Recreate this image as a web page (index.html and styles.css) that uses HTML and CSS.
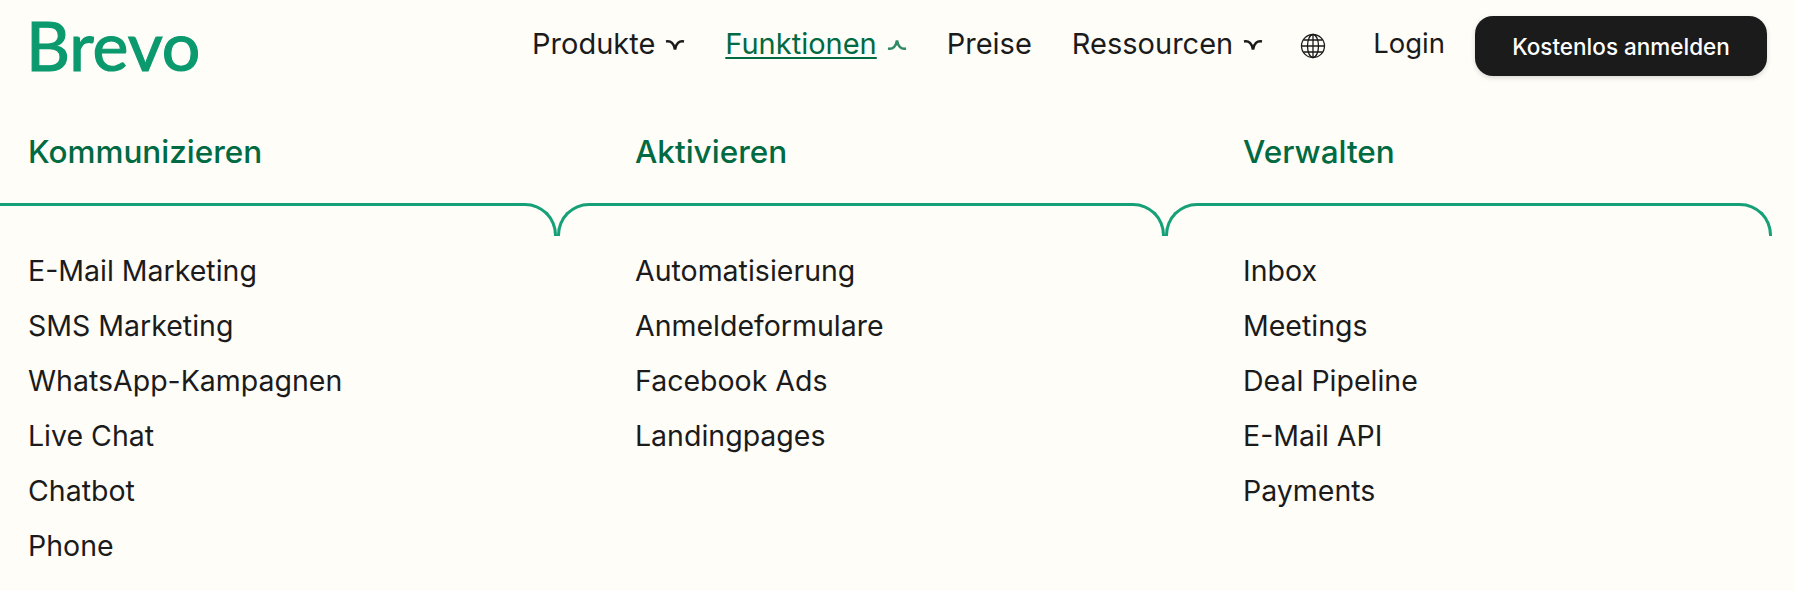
FILE: index.html
```html
<!DOCTYPE html>
<html lang="de">
<head>
    <meta charset="UTF-8">
    <meta name="viewport" content="width=device-width, initial-scale=1.0">
    <title>Brevo</title>
    <link rel="stylesheet" href="styles.css">
</head>
<body>
    <header class="header">
        <a class="logo" href="#">Brevo</a>
        <nav class="nav">
            <a class="nav-link" href="#">Produkte
                <svg class="chevron" viewBox="0 0 20 12"><path d="M1 2.5C6 1.5 9 4.5 10 10.5C11 4.5 14 1.5 19 2.5"/></svg>
            </a>
            <a class="nav-link active" href="#"><span class="nav-text">Funktionen</span>
                <svg class="chevron" viewBox="0 0 20 12"><path d="M1 9.5C6 10.5 9 7.5 10 1.5C11 7.5 14 10.5 19 9.5"/></svg>
            </a>
            <a class="nav-link" href="#">Preise</a>
            <a class="nav-link" href="#">Ressourcen
                <svg class="chevron" viewBox="0 0 20 12"><path d="M1 2.5C6 1.5 9 4.5 10 10.5C11 4.5 14 1.5 19 2.5"/></svg>
            </a>
            <a class="globe" href="#" aria-label="Sprache">
                <svg viewBox="0 0 26 26">
                    <circle cx="13" cy="13" r="11.5"/>
                    <ellipse cx="13" cy="13" rx="5.5" ry="11.5"/>
                    <path d="M13 1.5V24.5M1.5 13H24.5M3.5 7H22.5M3.5 19H22.5"/>
                </svg>
            </a>
            <a class="nav-link login" href="#">Login</a>
            <a class="button" href="#">Kostenlos anmelden</a>
        </nav>
    </header>
    <main class="menu">
        <section class="column first">
            <h2 class="column-title">Kommunizieren</h2>
            <div class="column-line"></div>
            <ul class="column-list">
                <li><a href="#">E-Mail Marketing</a></li>
                <li><a href="#">SMS Marketing</a></li>
                <li><a href="#">WhatsApp-Kampagnen</a></li>
                <li><a href="#">Live Chat</a></li>
                <li><a href="#">Chatbot</a></li>
                <li><a href="#">Phone</a></li>
            </ul>
        </section>
        <section class="column">
            <h2 class="column-title">Aktivieren</h2>
            <div class="column-line"></div>
            <ul class="column-list">
                <li><a href="#">Automatisierung</a></li>
                <li><a href="#">Anmeldeformulare</a></li>
                <li><a href="#">Facebook Ads</a></li>
                <li><a href="#">Landingpages</a></li>
            </ul>
        </section>
        <section class="column">
            <h2 class="column-title">Verwalten</h2>
            <div class="column-line"></div>
            <ul class="column-list">
                <li><a href="#">Inbox</a></li>
                <li><a href="#">Meetings</a></li>
                <li><a href="#">Deal Pipeline</a></li>
                <li><a href="#">E-Mail API</a></li>
                <li><a href="#">Payments</a></li>
            </ul>
        </section>
    </main>
</body>
</html>
```

FILE: styles.css
```css
body {
    background-color: #fffdf8;
    color: #1b1b1b;
    font-family: Inter, "Liberation Sans", sans-serif;
    height: 591px;
    margin: 0;
    overflow: hidden;
}
a {
    color: inherit;
    text-decoration: none;
}
.header {
    display: flex;
    align-items: center;
    justify-content: space-between;
    height: 92px;
    padding: 0 27px 0 26px;
}
.logo {
    padding-bottom: 3px;
    color: #0b996e;
    font-family: Lato, sans-serif;
    font-size: 68px;
    line-height: 89px;
    -webkit-text-stroke: 1.2px #0b996e;
}
.nav {
    display: flex;
    align-items: center;
}
.nav-link {
    display: flex;
    align-items: center;
    height: 60px;
    padding-bottom: 6px;
    box-sizing: border-box;
    font-size: 29px;
    margin-left: 40px;
}
.nav-link.active {
    color: #006a43;
}
.nav-link.login {
    font-size: 27.5px;
    margin-left: 47px;
}
.nav-text {
    text-decoration: underline;
    text-underline-offset: 3px;
    text-decoration-thickness: 2px;
}
.chevron {
    width: 20px;
    height: 12px;
    margin-top: 4px;
    margin-left: 10px;
    fill: none;
    stroke: currentColor;
    stroke-width: 2.6;
}
.active .chevron {
    stroke: #2f8a66;
}
.globe {
    display: flex;
    margin-left: 37px;
}
.globe svg {
    width: 26px;
    height: 26px;
    fill: none;
    stroke: #1b1b1b;
    stroke-width: 1.3;
}
.button {
    display: flex;
    align-items: center;
    justify-content: center;
    width: 292px;
    height: 60px;
    margin-left: 30px;
    background-color: #1b1b1b;
    border-radius: 18px;
    box-shadow: 0 2px 5px rgba(0, 0, 0, 0.15);
    color: #ffffff;
    font-size: 22.5px;
    font-weight: 500;
}
.menu {
    display: grid;
    grid-template-columns: 557px 608px 607px;
}
.column {
    padding-left: 78px;
}
.column.first {
    padding-left: 28px;
}
.column-title {
    margin: 0;
    padding-top: 44px;
    height: 67px;
    color: #006a43;
    font-size: 31.5px;
    font-weight: 500;
    line-height: 32px;
}
.column-line {
    height: 30px;
    margin-left: -78px;
    border: 3px solid #16a077;
    border-bottom: none;
    border-radius: 32px 32px 0 0;
}
.first .column-line {
    margin-left: -28px;
    border-left: none;
    border-top-left-radius: 0;
}
.column-list {
    list-style: none;
    margin: 7px 0 0;
    padding: 0;
}
.column-list li {
    font-size: 28.5px;
    line-height: 55px;
}
```
